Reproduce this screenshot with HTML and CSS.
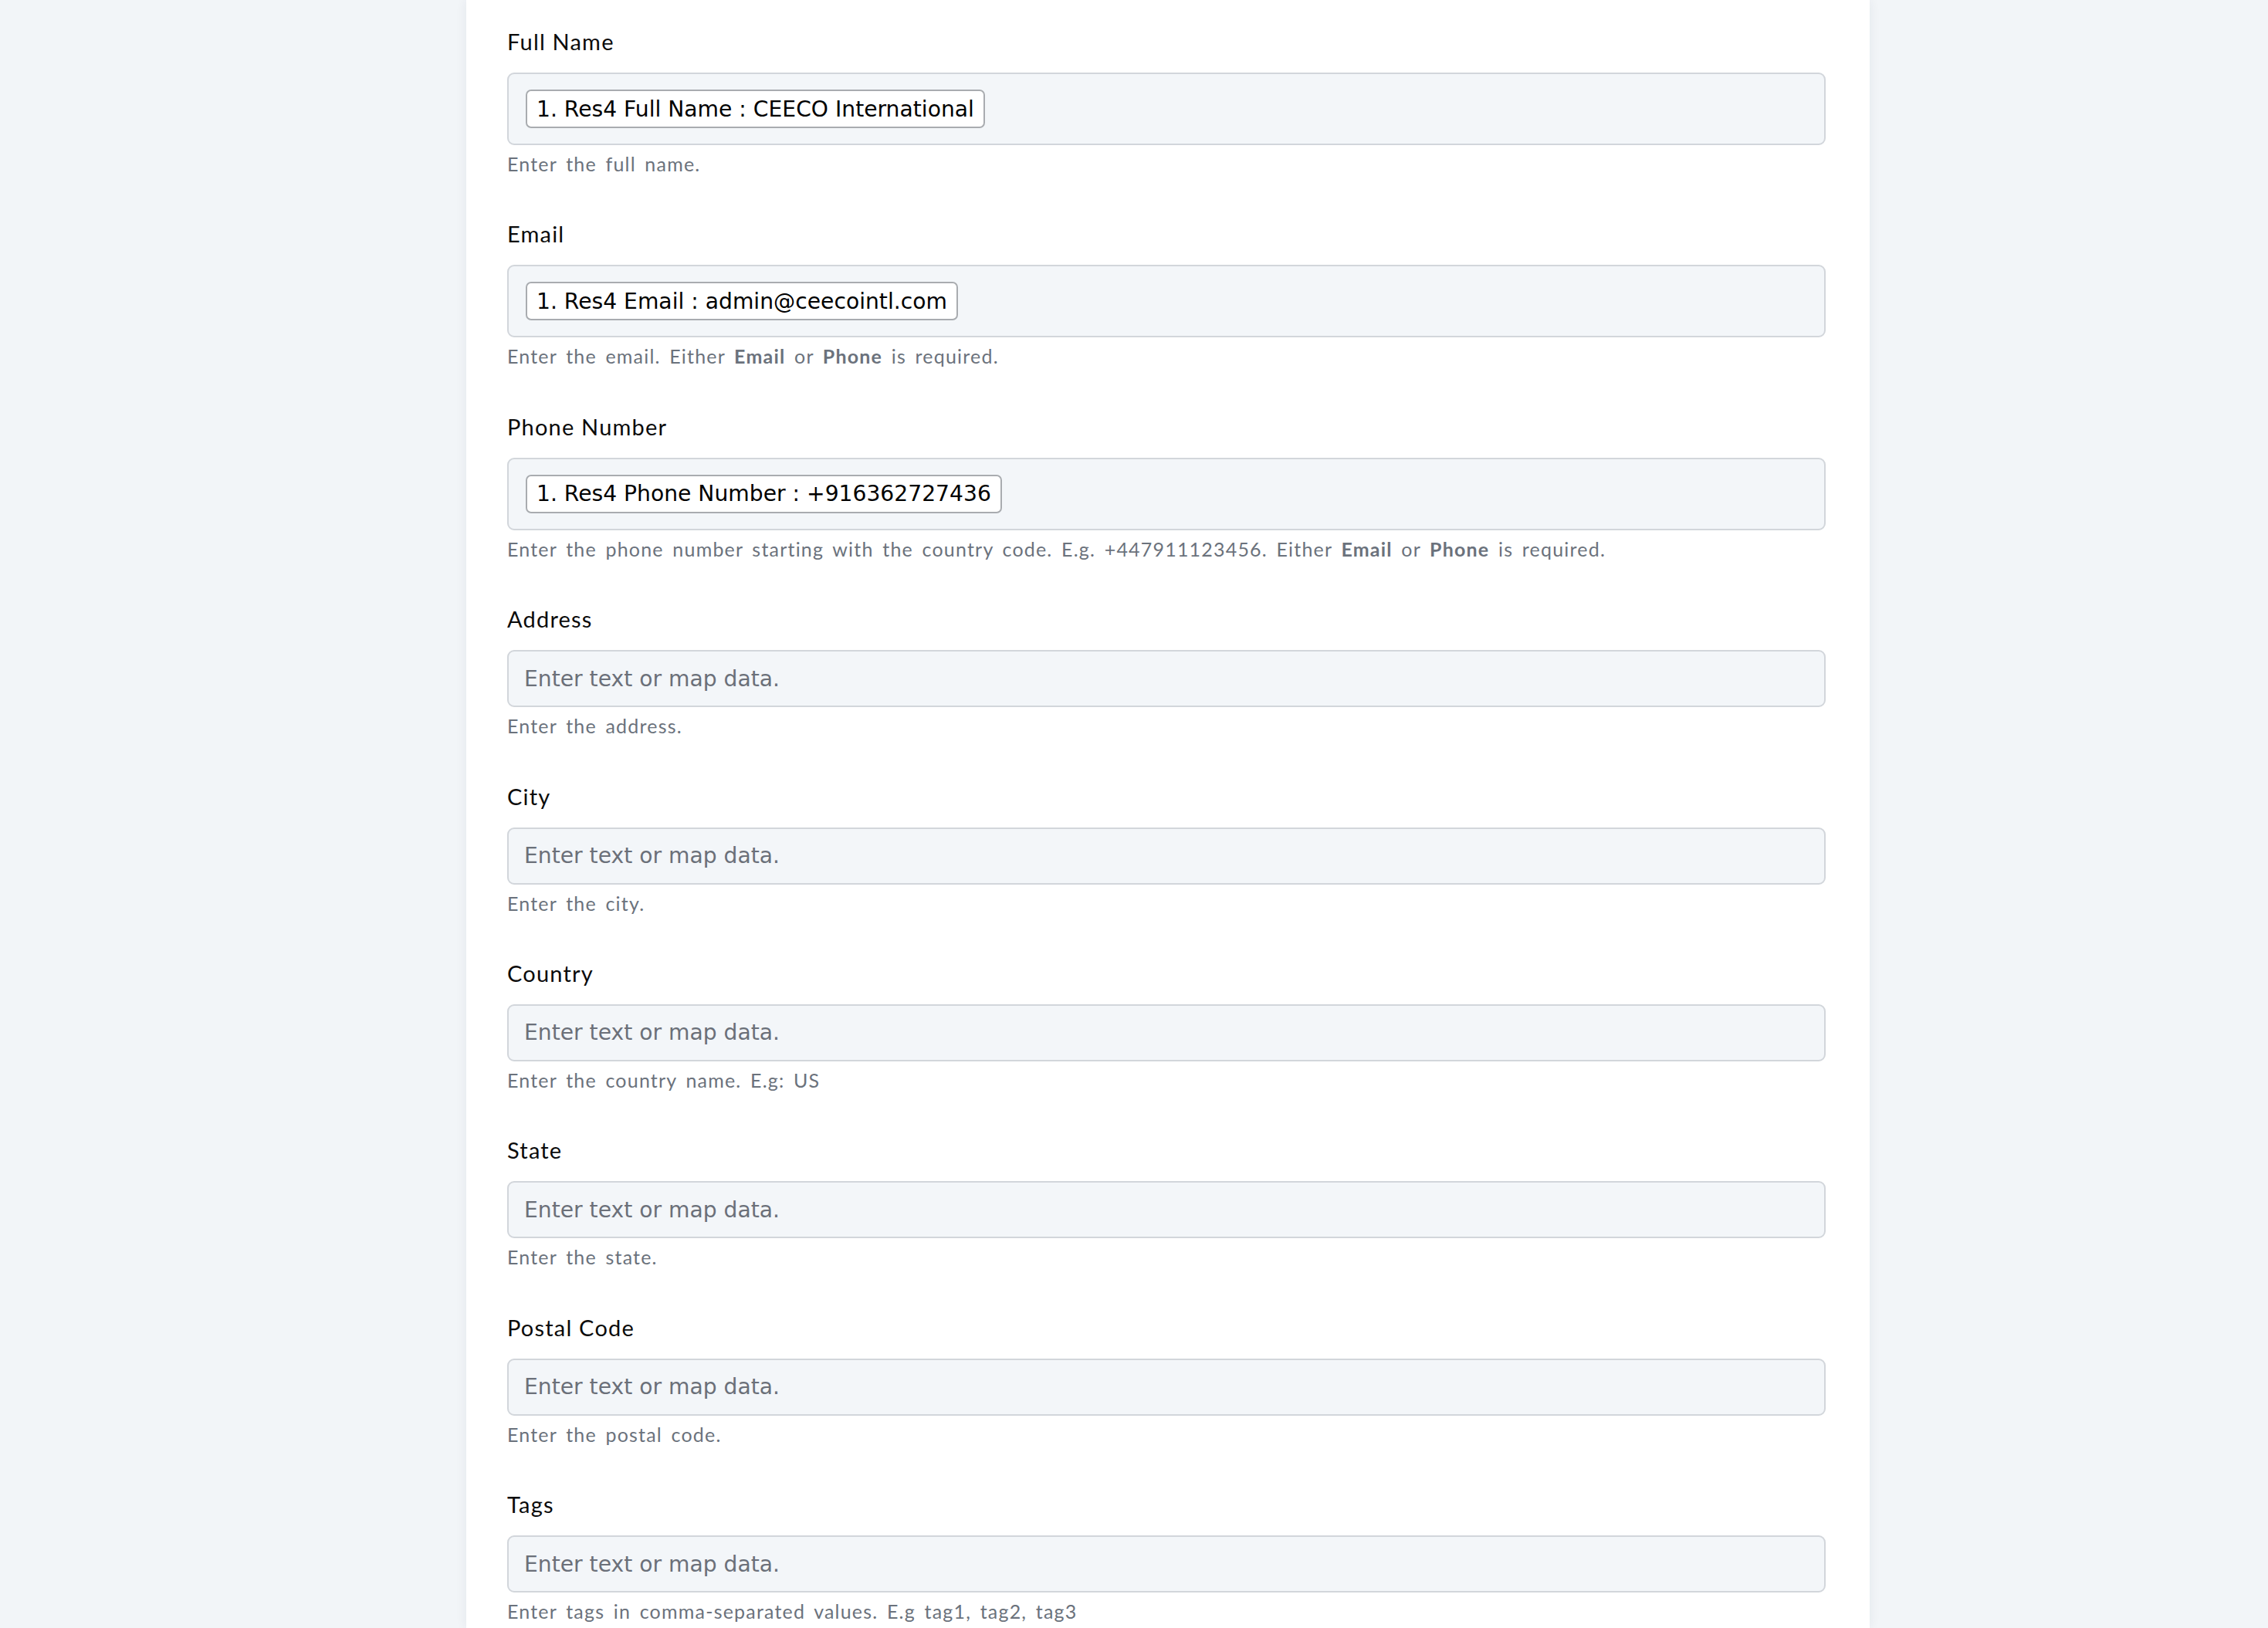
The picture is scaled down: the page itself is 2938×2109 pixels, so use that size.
FILE: index.html
```html
<!DOCTYPE html>
<html lang="en">
<head>
<meta charset="utf-8">
<title>Contact fields</title>
<link rel="stylesheet" href="styles.css">
</head>
<body>
<div class="page">
  <main class="card">
    <div class="field">
      <div class="label">Full Name</div>
      <div class="box box-tags"><span class="pill">1. Res4 Full Name : CEECO International</span></div>
      <div class="help">Enter the full name.</div>
    </div>
    <div class="field">
      <div class="label">Email</div>
      <div class="box box-tags"><span class="pill">1. Res4 Email : admin@ceecointl.com</span></div>
      <div class="help">Enter the email. Either <b>Email</b> or <b>Phone</b> is required.</div>
    </div>
    <div class="field">
      <div class="label">Phone Number</div>
      <div class="box box-tags"><span class="pill">1. Res4 Phone Number : +916362727436</span></div>
      <div class="help">Enter the phone number starting with the country code. E.g. +447911123456. Either <b>Email</b> or <b>Phone</b> is required.</div>
    </div>
    <div class="field">
      <div class="label">Address</div>
      <div class="box box-empty"><span class="placeholder">Enter text or map data.</span></div>
      <div class="help">Enter the address.</div>
    </div>
    <div class="field">
      <div class="label">City</div>
      <div class="box box-empty"><span class="placeholder">Enter text or map data.</span></div>
      <div class="help">Enter the city.</div>
    </div>
    <div class="field">
      <div class="label">Country</div>
      <div class="box box-empty"><span class="placeholder">Enter text or map data.</span></div>
      <div class="help">Enter the country name. E.g: US</div>
    </div>
    <div class="field">
      <div class="label">State</div>
      <div class="box box-empty"><span class="placeholder">Enter text or map data.</span></div>
      <div class="help">Enter the state.</div>
    </div>
    <div class="field">
      <div class="label">Postal Code</div>
      <div class="box box-empty"><span class="placeholder">Enter text or map data.</span></div>
      <div class="help">Enter the postal code.</div>
    </div>
    <div class="field">
      <div class="label">Tags</div>
      <div class="box box-empty"><span class="placeholder">Enter text or map data.</span></div>
      <div class="help">Enter tags in comma-separated values. E.g tag1, tag2, tag3</div>
    </div>
  </main>
</div>
</body>
</html>
```

FILE: styles.css
```css
html, body {
  margin: 0;
  padding: 0;
  background: #f2f5f8;
}

body {
  font-family: Lato, "Noto Sans", sans-serif;
  overflow: hidden;
}

.page {
  display: flex;
  padding-left: 604px;
  min-height: 2109px;
}

.card {
  width: 1818px;
  box-sizing: border-box;
  background: #ffffff;
  padding: 33px 57px 0 53px;
  box-shadow: 0 0 14px rgba(30, 45, 70, 0.07);
  display: flex;
  flex-direction: column;
  gap: 51.4px;
}

.field {
  display: flex;
  flex-direction: column;
}

.label {
  font-size: 29px;
  line-height: 42px;
  letter-spacing: 1.2px;
  color: #0b0b0b;
  margin-bottom: 19px;
}

.box {
  box-sizing: border-box;
  background: #f3f6f9;
  border: 2px solid #d2d6db;
  border-radius: 9px;
  display: flex;
  align-items: center;
}

.box-tags {
  height: 94px;
  padding: 0 22px;
}

.box-empty {
  height: 74px;
  padding: 0 20px;
}

.pill {
  box-sizing: border-box;
  height: 50px;
  display: inline-flex;
  align-items: center;
  padding: 0 12px;
  background: #ffffff;
  border: 2px solid #a9acb0;
  border-radius: 7px;
  font-family: "DejaVu Sans", Verdana, sans-serif;
  font-size: 28.2px;
  color: #000000;
  white-space: nowrap;
}

.placeholder {
  font-family: "DejaVu Sans", Verdana, sans-serif;
  font-size: 28.2px;
  color: #6b7079;
}

.help {
  margin-top: 6px;
  font-size: 25px;
  line-height: 37px;
  letter-spacing: 1.2px;
  word-spacing: 4px;
  color: #6b727c;
}

.help b {
  font-weight: 700;
}
```
